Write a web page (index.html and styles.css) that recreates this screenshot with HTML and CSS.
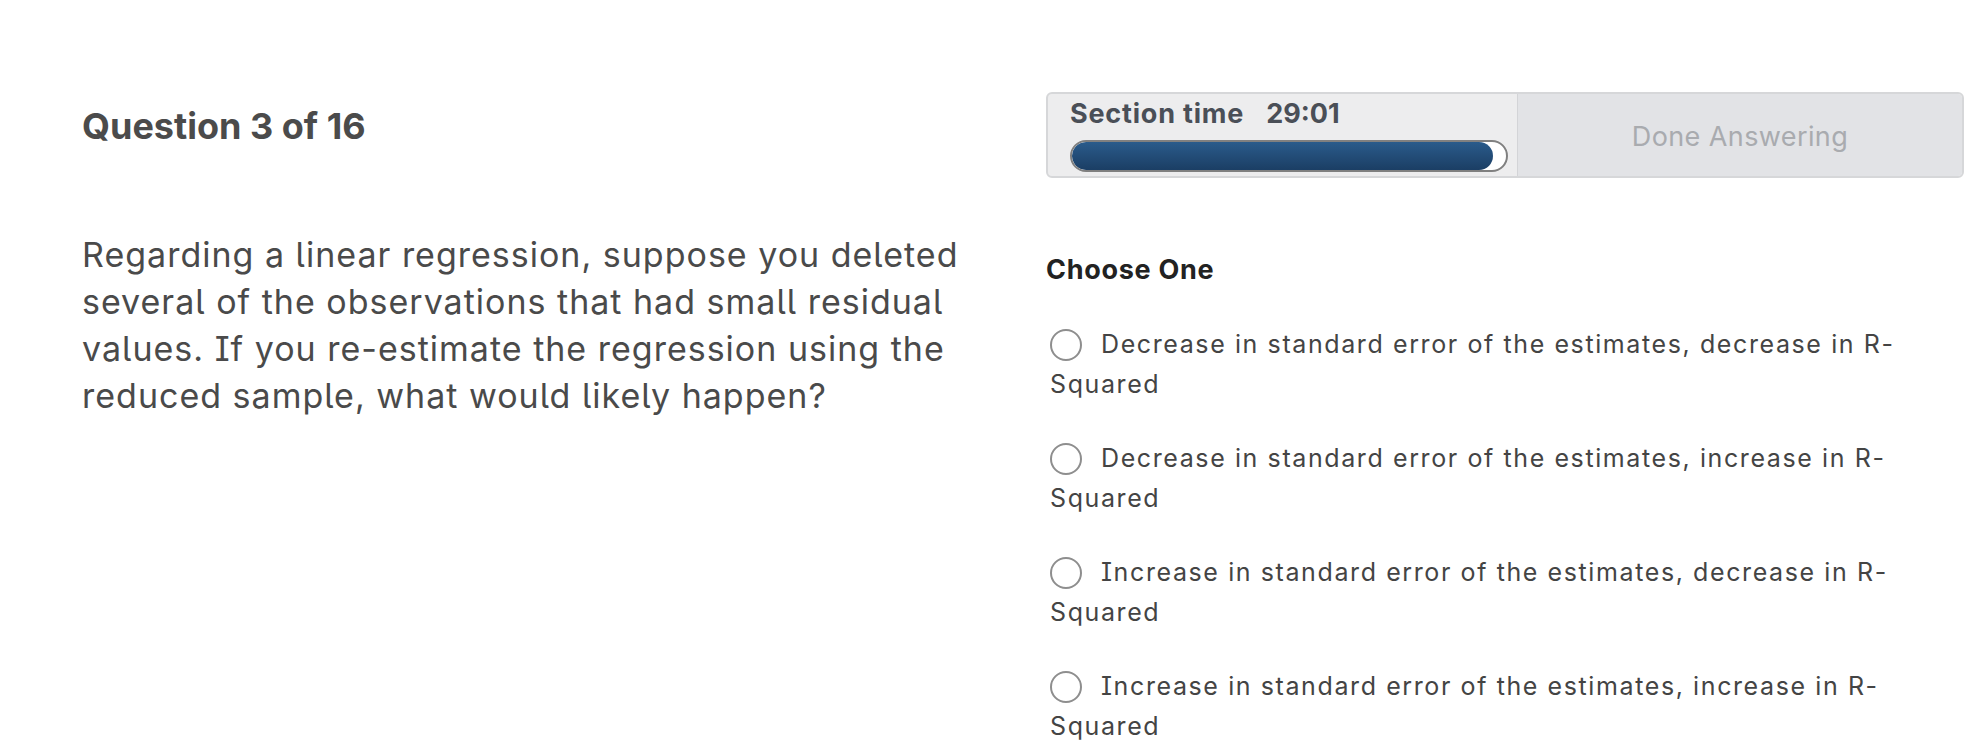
FILE: index.html
```html
<!DOCTYPE html>
<html lang="en">
<head>
<meta charset="utf-8">
<title>Question 3 of 16</title>
<link rel="stylesheet" href="styles.css">
</head>
<body>
<main class="page">
  <section class="left">
    <h1 class="q-title">Question 3 of 16</h1>
    <p class="q-text">Regarding a linear regression, suppose you deleted several of the observations that had small residual values. If you re-estimate the regression using the reduced sample, what would likely happen?</p>
  </section>
  <section class="right">
    <div class="toolbar">
      <div class="timer">
        <div class="timer-label"><span class="tl-name">Section time</span><span class="tl-value">29:01</span></div>
        <div class="progress"><div class="progress-fill" style="width: 97%"></div></div>
      </div>
      <button class="done-btn" disabled>Done Answering</button>
    </div>
    <h2 class="choose">Choose One</h2>
    <ul class="options">
      <li class="option"><span class="radio"></span>Decrease in standard error of the estimates, decrease in R-Squared</li>
      <li class="option"><span class="radio"></span>Decrease in standard error of the estimates, increase in R-Squared</li>
      <li class="option"><span class="radio"></span>Increase in standard error of the estimates, decrease in R-Squared</li>
      <li class="option"><span class="radio"></span>Increase in standard error of the estimates, increase in R-Squared</li>
    </ul>
  </section>
</main>
</body>
</html>
```

FILE: styles.css
```css
html, body {
  margin: 0;
  padding: 0;
  background: #ffffff;
}
body {
  font-family: "Inter", "Noto Sans", "Liberation Sans", sans-serif;
  font-feature-settings: "cv05", "cv08";
  color: #4a4a4a;
}
.page {
  display: flex;
  gap: 64px;
  padding: 92px 22px 0 82px;
}
.left {
  width: 900px;
  flex: none;
}
.q-title {
  margin: 12px 0 0;
  font-size: 36px;
  line-height: 44px;
  font-weight: 700;
  color: #4b4b4b;
}
.q-text {
  margin: 83px 0 0;
  font-size: 34px;
  line-height: 47px;
  font-weight: 400;
  letter-spacing: 1px;
  color: #4a4a4a;
}
.right {
  flex: 1;
  min-width: 0;
}
.toolbar {
  display: flex;
  height: 86px;
  box-sizing: border-box;
  border: 2px solid #d6d7d9;
  border-radius: 6px;
  overflow: hidden;
  background: #ededee;
}
.timer {
  width: 469px;
  box-sizing: border-box;
  padding: 4px 10px 0 22px;
  display: flex;
  flex-direction: column;
}
.timer-label {
  font-size: 27px;
  line-height: 32px;
  font-weight: 700;
  color: #4a4f57;
  display: flex;
  gap: 22px;
}
.tl-name {
  letter-spacing: 0.8px;
}
.progress {
  margin-top: 10px;
  width: 438px;
  height: 32px;
  box-sizing: border-box;
  border: 2px solid #808080;
  border-radius: 16px;
  background: #ffffff;
  overflow: hidden;
}
.progress-fill {
  height: 100%;
  border-radius: 14px;
  background: linear-gradient(#2a5b8b, #1b3e64);
}
.done-btn {
  flex: 1;
  margin: 0;
  border: none;
  border-left: 1px solid #d3d4d7;
  border-radius: 0 4px 4px 0;
  background: #e2e3e6;
  font-family: inherit;
  font-size: 27px;
  font-weight: 400;
  letter-spacing: 0.4px;
  color: #a9abaf;
  padding: 2px 0 0;
}
.choose {
  margin: 76px 0 0;
  font-size: 27px;
  line-height: 32px;
  font-weight: 700;
  letter-spacing: 0.7px;
  color: #222222;
}
.options {
  list-style: none;
  margin: 38px 0 0;
  padding: 0;
  width: 880px;
}
.option {
  font-size: 25px;
  line-height: 40px;
  letter-spacing: 1.6px;
  color: #444444;
  margin-bottom: 34px;
  padding-left: 4px;
}
.radio {
  display: inline-block;
  width: 32px;
  height: 32px;
  box-sizing: border-box;
  border: 2px solid #8e8e8e;
  border-radius: 50%;
  background: #ffffff;
  vertical-align: -8px;
  margin: 0 19px 0 0;
}
```
